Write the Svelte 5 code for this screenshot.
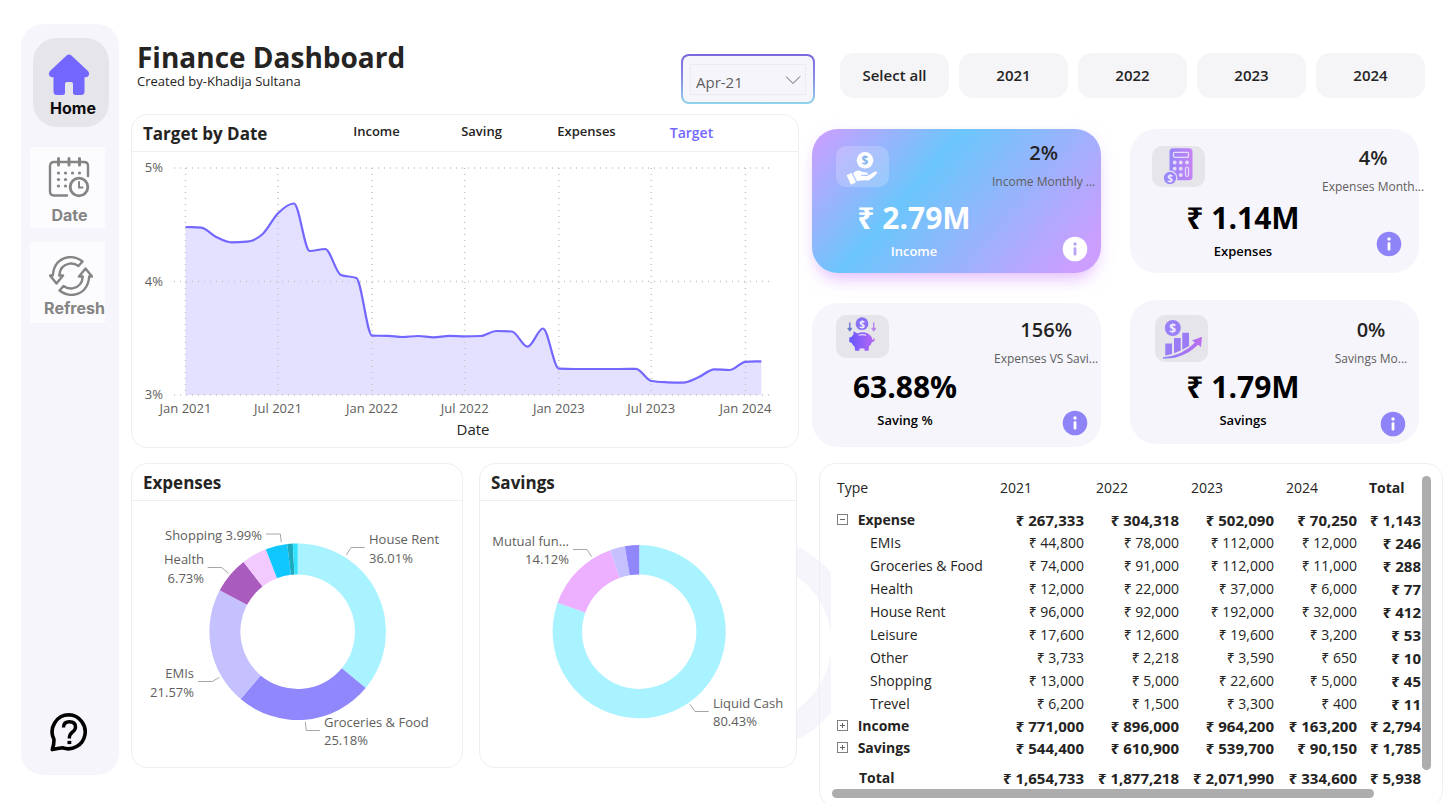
<script>
  const years = ['2021', '2022', '2023', '2024'];
  const tabs = ['Income', 'Saving', 'Expenses', 'Target'];
  let activeTab = $state('Target');
  let month = $state('Apr-21');

  // Monthly target line, Jan 2021 to Feb 2024, as heights on the plot
  const levels = [
    227, 227.7, 236.7, 242.3, 241.7, 234, 213.3, 203.5, 251, 249, 275, 278,
    335.7, 335.8, 337, 336, 337.3, 335.9, 336.3, 336, 331, 331.5, 346.7, 328.5,
    368.6, 369, 369, 369, 369, 368.8, 381, 382.3, 382.7, 377.3, 369.3, 370,
    361.8, 361.3
  ];
  const start = Date.UTC(2021, 0, 1);
  const dayWidth = 0.5114;
  const points = levels.map((y, i) => [
    185.5 + ((Date.UTC(2021, i, 1) - start) / 86400000) * dayWidth,
    y
  ]);

  function monotone(pts) {
    const n = pts.length;
    const slope = [];
    for (let i = 0; i < n - 1; i++) {
      slope.push((pts[i + 1][1] - pts[i][1]) / (pts[i + 1][0] - pts[i][0]));
    }
    const tan = pts.map((_, i) => {
      if (i === 0) return slope[0];
      if (i === n - 1) return slope[n - 2];
      const a = slope[i - 1];
      const b = slope[i];
      if (a * b <= 0) return 0;
      const h0 = pts[i][0] - pts[i - 1][0];
      const h1 = pts[i + 1][0] - pts[i][0];
      const p = (a * h1 + b * h0) / (h0 + h1);
      return Math.sign(a) * 2 * Math.min(Math.abs(a), Math.abs(b), Math.abs(p) / 2);
    });
    let d = `M${pts[0][0]},${pts[0][1]}`;
    for (let i = 0; i < n - 1; i++) {
      const h = (pts[i + 1][0] - pts[i][0]) / 3;
      d += `C${pts[i][0] + h},${pts[i][1] + tan[i] * h} ${pts[i + 1][0] - h},${pts[i + 1][1] - tan[i + 1] * h} ${pts[i + 1][0]},${pts[i + 1][1]}`;
    }
    return d;
  }
  const line = monotone(points);
  const area = `${line}V395H185.5Z`;

  const xTicks = [
    [185.5, 'Jan 2021'], [278, 'Jul 2021'], [372, 'Jan 2022'], [464.7, 'Jul 2022'],
    [558.8, 'Jan 2023'], [651.3, 'Jul 2023'], [745.5, 'Jan 2024']
  ];
  const yTicks = [[168, '5%'], [281.5, '4%'], [395, '3%']];

  function ring(cx, cy, R, r, slices) {
    let a = 0;
    return slices.map(([share, fill]) => {
      const b = a + (share / 100) * Math.PI * 2;
      const big = b - a > Math.PI ? 1 : 0;
      const at = (rad, t) => `${cx + rad * Math.sin(t)},${cy - rad * Math.cos(t)}`;
      const d = `M${at(R, a)}A${R},${R} 0 ${big} 1 ${at(R, b)}L${at(r, b)}A${r},${r} 0 ${big} 0 ${at(r, a)}Z`;
      a = b;
      return { d, fill };
    });
  }

  const expenseRing = ring(297.7, 631.7, 88.3, 57.3, [
    [36.01, '#a8f3ff'], [25.18, '#8f87fb'], [21.57, '#c5c1ff'], [6.73, '#a95cbd'],
    [4.63, '#f2caff'], [3.99, '#10c8ff'], [1, '#1da9c0'], [0.89, '#2fe4ff']
  ]);
  const savingsRing = ring(639.2, 631.7, 86.6, 57.2, [
    [80.43, '#a8f3ff'], [14.12, '#edafff'], [2.8, '#c5c1ff'], [2.65, '#8f87fb']
  ]);

  const donuts = [
    {
      title: 'Expenses',
      box: '132 501 330 266',
      slices: expenseRing,
      leaders: [
        '266,534 280.3,534 281.3,542.3', '207.7,567.5 221.7,567.5 228.3,573.3',
        '346.3,555 351,547.5 364.7,547.5', '198,681.5 212.3,681.5 219.3,677.3',
        '305.3,721.7 306.3,730.5 320,730.5'
      ],
      labels: [
        [262, 540, 'end', 'Shopping 3.99%'],
        [204, 564, 'end', 'Health'], [204, 583, 'end', '6.73%'],
        [369, 544, 'start', 'House Rent'], [369, 563, 'start', '36.01%'],
        [194, 678, 'end', 'EMIs'], [194, 697, 'end', '21.57%'],
        [324, 727, 'start', 'Groceries & Food'], [324, 745, 'start', '25.18%']
      ]
    },
    {
      title: 'Savings',
      box: '480 501 316 266',
      slices: savingsRing,
      leaders: ['573,549.5 587,549.5 591.7,556.7', '690,704.3 695,711.5 708.7,711.5'],
      labels: [
        [569, 546, 'end', 'Mutual fun...'], [569, 564, 'end', '14.12%'],
        [713, 708, 'start', 'Liquid Cash'], [713, 726, 'start', '80.43%']
      ]
    }
  ];

  const kpiColumns = [
    [
      { id: 'income', value: '₹ 2.79M', label: 'Income', rate: '2%', note: 'Income Monthly ...' },
      { id: 'ratio', value: '63.88%', label: 'Saving %', rate: '156%', note: 'Expenses VS Savi...' }
    ],
    [
      { id: 'expenses', value: '₹ 1.14M', label: 'Expenses', rate: '4%', note: 'Expenses Month...' },
      { id: 'savings', value: '₹ 1.79M', label: 'Savings', rate: '0%', note: 'Savings Mo...' }
    ]
  ];

  const rows = [
    { kind: 'group', sign: '−', name: 'Expense', cells: [267333, 304318, 502090, 70250] },
    { kind: 'item', name: 'EMIs', cells: [44800, 78000, 112000, 12000] },
    { kind: 'item', name: 'Groceries & Food', cells: [74000, 91000, 112000, 11000] },
    { kind: 'item', name: 'Health', cells: [12000, 22000, 37000, 6000] },
    { kind: 'item', name: 'House Rent', cells: [96000, 92000, 192000, 32000] },
    { kind: 'item', name: 'Leisure', cells: [17600, 12600, 19600, 3200] },
    { kind: 'item', name: 'Other', cells: [3733, 2218, 3590, 650] },
    { kind: 'item', name: 'Shopping', cells: [13000, 5000, 22600, 5000] },
    { kind: 'item', name: 'Trevel', cells: [6200, 1500, 3300, 400] },
    { kind: 'group', sign: '+', name: 'Income', cells: [771000, 896000, 964200, 163200] },
    { kind: 'group', sign: '+', name: 'Savings', cells: [544400, 610900, 539700, 90150] },
    { kind: 'total', name: 'Total', cells: [1654733, 1877218, 2071990, 334600] }
  ];
  const rupees = (n) => '₹ ' + n.toLocaleString('en-US');
  const sum = (list) => list.reduce((a, b) => a + b, 0);
</script>

<div class="page">
  <nav class="sidebar">
    <button class="nav home">
      <svg width="42" height="42" viewBox="0 0 42 42" aria-hidden="true">
        <path d="M18.6 1.4Q21 -.6 23.4 1.4L40 17Q42 19.500 40.500 21.800Q39.500 23.500 36.500 23.300V37.500Q36.500 41 33 41H27.500Q25 41 25 38.500V30Q25 28 23 28H19Q17 28 17 30V38.500Q17 41 14.500 41H9Q5.500 41 5.500 37.500V23.300Q2.500 23.500 1.500 21.800Q0 19.500 2 17Z" fill="#7367ff" />
      </svg>
      <span>Home</span>
    </button>
    <button class="nav date">
      <svg width="42" height="42" viewBox="0 0 42 42" fill="none" stroke="#848484" stroke-width="2.400" stroke-linecap="round" aria-hidden="true">
        <path d="M19 38.500H6Q2 38.500 2 34.500V9Q2 5 6 5H36Q40 5 40 9V19" />
        <path d="M10.500 1.500V8M21 1.500V8M31.500 1.500V8" stroke-width="3" />
        <circle cx="31" cy="30" r="8.800" stroke-width="2.800" />
        <path d="M31 25V30.500H34.500" stroke-width="2" />
        <g fill="#848484" stroke="none">
          <circle cx="10.500" cy="16" r="1.600" /><circle cx="17.500" cy="16" r="1.600" /><circle cx="24.500" cy="16" r="1.600" /><circle cx="31.500" cy="16" r="1.600" />
          <circle cx="10.500" cy="22.500" r="1.600" /><circle cx="17.500" cy="22.500" r="1.600" />
          <circle cx="10.500" cy="29" r="1.600" /><circle cx="17.500" cy="29" r="1.600" />
        </g>
      </svg>
      <span>Date</span>
    </button>
    <button class="nav refresh">
      <svg width="44" height="40" viewBox="0 0 44 40" fill="none" stroke="#848484" stroke-width="2.400" stroke-linejoin="round" aria-hidden="true">
        <path d="M33.500 5.500Q27 .5 19.500 1.200C10.500 2.200 4.500 9 3.800 19.500H1L7.500 27.500L14 19.500H10.200C10.800 12.500 15 8.500 20.500 7.600Q25.500 7 29.500 10Z" />
        <path d="M10.500 34.500Q17 39.500 24.500 38.800C33.500 37.800 39.500 31 40.200 20.500H43L36.500 12.500L30 20.500H33.800C33.200 27.500 29 31.500 23.500 32.400Q18.500 33 14.500 30Z" />
      </svg>
      <span>Refresh</span>
    </button>
    <button class="help" aria-label="Help">
      <svg width="40" height="40" viewBox="0 0 40 40" fill="none" stroke="#000" aria-hidden="true">
        <path d="M20 2.800A17 17 0 1 1 13.500 35.800Q9 36.500 3.300 37.600Q5 33 5 27.500A17 17 0 0 1 20 2.800Z" stroke-width="3.600" stroke-linejoin="round" />
        <path d="M14.500 15.500Q14.500 9.800 20.500 9.800T26.500 15Q26.500 18 23.500 20T20.300 26.500" stroke-width="3.400" />
        <path d="M18.500 30.500H22.300" stroke-width="3.200" />
      </svg>
    </button>
  </nav>

  <main>
    <header>
      <div class="heading">
        <h1>Finance Dashboard</h1>
        <p>Created by-Khadija Sultana</p>
      </div>
      <div class="month">
        <div class="month-box">
          <select aria-label="Month" bind:value={month}>
            <option>Apr-21</option>
          </select>
          <svg width="16" height="10" viewBox="0 0 16 10" aria-hidden="true"><path d="M1 1.500L8 8.500L15 1.500" fill="none" stroke="#605e5c" /></svg>
        </div>
      </div>
      <div class="slicer">
        <button>Select all</button>
        {#each years as year}
          <button>{year}</button>
        {/each}
      </div>
    </header>

    <div class="overview">
      <section class="panel trend">
        <div class="panel-head">
          <h2>{activeTab} by Date</h2>
          <div class="tabs">
            {#each tabs as tab}
              <button class:active={tab === activeTab} onclick={() => (activeTab = tab)}>{tab}</button>
            {/each}
          </div>
        </div>
        <svg class="chart" viewBox="132 152 666 295" role="img" aria-label="Target by Date">
          <path d={area} fill="#e4e0ff" />
          <g stroke="#c4c4c4" stroke-dasharray="1 5" stroke-width="1.500">
            {#each yTicks as [y]}
              <line x1="174" x2="772" y1={y} y2={y} />
            {/each}
            {#each xTicks as [x]}
              <line x1={x} x2={x} y1="168" y2="395" />
            {/each}
          </g>
          <path d={line} fill="none" stroke="#7367ff" stroke-width="2.200" stroke-linejoin="round" />
          <g class="axis">
            {#each yTicks as [y, text]}
              <text x="163" y={y + 4} text-anchor="end">{text}</text>
            {/each}
            {#each xTicks as [x, text]}
              <text {x} y="413" text-anchor="middle">{text}</text>
            {/each}
          </g>
          <text class="axis-title" x="473" y="435" text-anchor="middle">Date</text>
        </svg>
      </section>

      <div class="kpis">
        {#each kpiColumns as column}
          <div class="kpi-column">
            {#each column as card}
              <article class="kpi {card.id}">
                <div class="main-figure">
                  <div class="tile">
                    {#if card.id === 'income'}
                      <svg width="53" height="41" viewBox="0 0 53 41" aria-hidden="true">
                        <circle cx="29" cy="14.300" r="8.300" fill="#fff" />
                        <text class="coin" x="29" y="18.800" fill="#86b4f0">$</text>
                        <path d="M10.600 29.200L15.600 27L20 36.300L15 38.800Z" fill="#fff" />
                        <path d="M17 27.200Q20 24 24 24.700Q26 26.300 30 26.500Q32.500 27 31.500 29H25.500Q30 30.500 33 29L38.500 25.700Q41 25 41 27Q38 31.500 32.500 34.500Q27 34 21 35.200Z" fill="#fff" />
                        <path d="M25 29.300H31.500" stroke="#9bb5fb" stroke-width=".8" />
                      </svg>
                    {:else if card.id === 'ratio'}
                      <svg width="53" height="43" viewBox="0 0 53 43" aria-hidden="true">
                        <defs><linearGradient id="pig"><stop offset="0" stop-color="#6657ff" /><stop offset="1" stop-color="#b968f4" /></linearGradient></defs>
                        <circle cx="26" cy="8.700" r="6.400" fill="#8a72f5" />
                        <text class="coin small" x="26" y="12.500" fill="#f0eaff">$</text>
                        <path d="M13.800 7.500V15M11.800 12.800L13.800 15.500L15.800 12.800" fill="none" stroke="#6674ce" stroke-width="1.400" />
                        <path d="M37.700 7.500V15M35.700 12.800L37.700 15.500L39.700 12.800" fill="none" stroke="#b583ee" stroke-width="1.400" />
                        <path d="M17.500 16.200L21.500 18.500Q26 16.500 31 18Q36 20.500 36.500 25Q38 25.500 37.300 23.500L38.500 23.300Q39.500 27 36 27Q35 30 33 31.200L32.600 35.800H28.500V33.500H23.500V35.800H19.300L18.500 31.500Q16.500 30 15.800 28L13.300 27V22.500L15.500 22Q16 20.500 17.500 19.500Z" fill="url(#pig)" />
                        <path d="M22.500 20.300Q26.500 18.800 30 20.400" fill="none" stroke="#ded7ff" stroke-width="1.200" />
                      </svg>
                    {:else if card.id === 'expenses'}
                      <svg width="53" height="41" viewBox="0 0 53 41" aria-hidden="true">
                        <defs><linearGradient id="calc"><stop offset="0" stop-color="#9686fb" /><stop offset="1" stop-color="#c583f4" /></linearGradient></defs>
                        <rect x="17.500" y="2.300" width="23" height="32" rx="3.500" fill="url(#calc)" />
                        <rect x="21.500" y="6.300" width="15" height="5" rx="1" fill="none" stroke="#e6dcf8" stroke-width="1.300" />
                        <g fill="#e6dcf8">
                          <circle cx="22.700" cy="16.500" r="1.900" /><circle cx="28.800" cy="16.500" r="1.900" /><circle cx="35" cy="16.500" r="1.900" />
                          <circle cx="22.700" cy="22.700" r="1.900" /><circle cx="28.800" cy="22.700" r="1.900" /><circle cx="28.800" cy="29" r="1.900" />
                        </g>
                        <rect x="33.500" y="21" width="3" height="9.500" rx="1.500" fill="none" stroke="#e6dcf8" stroke-width="1.200" />
                        <circle cx="18" cy="32" r="6.800" fill="#9a88fb" stroke="#e8e7ee" stroke-width="1.200" />
                        <text class="coin small" x="18" y="35.800" fill="#f0eaff">$</text>
                      </svg>
                    {:else}
                      <svg width="53" height="47" viewBox="0 0 53 47" aria-hidden="true">
                        <defs><linearGradient id="rise"><stop offset="0" stop-color="#8580f8" /><stop offset="1" stop-color="#bd6df0" /></linearGradient></defs>
                        <circle cx="17.800" cy="13" r="8" fill="#9a80f8" />
                        <text class="coin" x="17.800" y="17.500" fill="#f0eaff">$</text>
                        <path d="M10.300 28.500H17V39L10.300 40.500ZM19 23H25.700V35.500L19 38.300ZM27.300 17.700H34V31L27.300 34.800Z" fill="#9a7df6" />
                        <path d="M8 42.300Q27 41 40 27.500L37 25.500L47 21.800L46 32L43 29.800Q28 44.500 8 43.500Z" fill="url(#rise)" />
                      </svg>
                    {/if}
                  </div>
                  <strong>{card.value}</strong>
                  <span>{card.label}</span>
                </div>
                <div class="rate">
                  <b>{card.rate}</b>
                  <small>{card.note}</small>
                </div>
                <button class="info" aria-label="About {card.label}">
                  <svg width="26" height="26" viewBox="0 0 26 26" aria-hidden="true">
                    <circle class="disc" cx="13" cy="13" r="12.300" />
                    <circle class="mark" cx="13" cy="8" r="1.700" />
                    <rect class="mark" x="11.600" y="11.200" width="2.800" height="8.300" rx="1" />
                  </svg>
                </button>
              </article>
            {/each}
          </div>
        {/each}
      </div>
    </div>

    <div class="details">
      {#each donuts as donut}
        <section class="panel donut">
          <div class="panel-head"><h2>{donut.title}</h2></div>
          <svg class="chart" viewBox={donut.box} role="img" aria-label={donut.title}>
            {#each donut.slices as slice}
              <path d={slice.d} fill={slice.fill} />
            {/each}
            {#each donut.leaders as leader}
              <polyline points={leader} fill="none" stroke="#a6a6a6" />
            {/each}
            {#each donut.labels as [x, y, anchor, text]}
              <text {x} {y} text-anchor={anchor}>{text}</text>
            {/each}
          </svg>
        </section>
      {/each}

      <section class="panel matrix">
        <svg class="halo" width="34" height="220" viewBox="797 534 34 220" aria-hidden="true">
          <circle cx="750.500" cy="643" r="94" fill="none" stroke="#f6f5fc" stroke-width="26" />
        </svg>
        <div class="viewport">
          <table>
            <colgroup><col class="c-type" /><col class="c-first" /><col class="c-year" /><col class="c-year" /><col class="c-last" /><col class="c-total" /></colgroup>
            <thead>
              <tr>
                <th>Type</th>
                {#each years as year}<th>{year}</th>{/each}
                <th class="sum">Total</th>
              </tr>
            </thead>
            <tbody>
              {#each rows as row}
                <tr class={row.kind}>
                  <th scope="row">
                    {#if row.sign}
                      <button class="toggle" aria-label="Toggle {row.name}">
                        <svg width="11" height="11" viewBox="0 0 11 11" aria-hidden="true">
                          <rect x=".5" y=".5" width="10" height="10" fill="none" stroke="#808080" />
                          <path d={row.sign === '+' ? 'M3 5.500H8M5.500 3V8' : 'M3 5.500H8'} stroke="#666" />
                        </svg>
                      </button>
                    {/if}
                    {row.name}
                  </th>
                  {#each row.cells as cell}<td>{rupees(cell)}</td>{/each}
                  <td class="sum">{rupees(sum(row.cells))}</td>
                </tr>
              {/each}
            </tbody>
          </table>
        </div>
        <div class="bar vertical"></div>
        <div class="bar horizontal"></div>
      </section>
    </div>
  </main>
</div>

<style>
  :global(body) {
    margin: 0;
    background: #fff;
  }
  .page {
    display: flex;
    gap: 12px;
    min-height: 100vh;
    padding: 24px 3px 0 21px;
    box-sizing: border-box;
    overflow: hidden;
    font-family: 'Open Sans', 'Noto Sans', sans-serif;
    color: #252423;
  }
  button {
    font: inherit;
    color: inherit;
    border: 0;
    padding: 0;
    background: none;
    cursor: pointer;
  }
  svg {
    display: block;
  }

  .sidebar {
    flex: 0 0 98px;
    box-sizing: border-box;
    display: flex;
    flex-direction: column;
    align-items: flex-start;
    align-self: flex-start;
    min-height: 751px;
    padding: 14px 0 23px 9px;
    border-radius: 22px;
    background: #f6f5fc;
  }
  .nav {
    display: flex;
    flex-direction: column;
    align-items: center;
    width: 75px;
    height: 81px;
    box-sizing: border-box;
    padding-top: 10px;
    background: #fcfcfe;
    color: #848484;
    font: 700 16px/20px Inter, 'Liberation Sans', sans-serif;
  }
  .nav span {
    white-space: nowrap;
  }
  .home {
    width: 76px;
    height: 89px;
    margin: 0 0 20px 3px;
    padding-top: 16px;
    border-radius: 24px;
    background: #e6e5ea;
    color: #0b0b0b;
  }
  .home svg {
    margin-right: 4px;
  }
  .home span {
    margin-left: 4px;
    margin-top: 2px;
  }
  .date {
    margin-bottom: 14px;
  }
  .date svg {
    margin-left: 2px;
  }
  .date span {
    margin: 6px 0 0 4px;
  }
  .refresh {
    padding-top: 14px;
  }
  .refresh svg {
    margin-left: 6px;
  }
  .refresh span {
    margin: 2px 0 0 14px;
  }
  .help {
    margin: auto 0 0 19px;
  }

  main {
    flex: 1;
    min-width: 0;
  }
  header {
    display: flex;
    align-items: flex-start;
    height: 90px;
    box-sizing: border-box;
  }
  .heading {
    flex: 1;
    padding: 17px 0 0 6px;
  }
  h1 {
    margin: 0;
    font-size: 28px;
    line-height: 32px;
    font-weight: 700;
  }
  p {
    margin: 0;
    font-size: 13px;
    line-height: 16px;
  }
  .month {
    width: 134px;
    box-sizing: border-box;
    margin-top: 30px;
    padding: 8px 7px 7px;
    border: 2px solid transparent;
    border-radius: 8px;
    background: linear-gradient(#f6f5fc, #f6f5fc) padding-box, linear-gradient(#7868dc, #8a8ee4 50%, #8fd4e8) border-box;
  }
  .month-box {
    display: flex;
    align-items: center;
    padding-right: 4px;
    border: 1px solid #ececf0;
  }
  select {
    flex: 1;
    min-width: 0;
    height: 29px;
    appearance: none;
    padding: 4px 0 0 5px;
    border: 0;
    background: none;
    color: #605e5c;
    font: 15px 'Open Sans', 'Noto Sans', sans-serif;
  }
  .slicer {
    display: grid;
    grid-template-columns: repeat(5, 1fr);
    gap: 10px;
    width: 585px;
    margin: 29px 18px 0 25px;
  }
  .slicer button {
    height: 45px;
    padding-bottom: 2px;
    border-radius: 14px;
    background: #f5f5f8;
    font-size: 15px;
    font-weight: 600;
  }

  .overview {
    display: grid;
    grid-template-columns: minmax(0, 668fr) minmax(0, 607fr);
    gap: 13px;
    padding-right: 24px;
  }
  .panel {
    position: relative;
    box-sizing: border-box;
    border: 1px solid #efeff1;
    border-radius: 16px;
    background: #fff;
  }
  .panel-head {
    display: flex;
    align-items: center;
    height: 34px;
    padding: 2px 0 0 11px;
    border-bottom: 1px solid #efeff1;
  }
  h2 {
    margin: 0;
    font-size: 17px;
    line-height: 24px;
    font-weight: 700;
  }
  .trend h2 {
    width: 181px;
  }
  .tabs {
    display: grid;
    grid-template-columns: repeat(4, 105px);
    margin-bottom: 6px;
    font-size: 13px;
    font-weight: 600;
  }
  .tabs button {
    height: 20px;
    line-height: 20px;
    overflow: hidden;
  }
  .tabs .active {
    height: 17px;
    margin-top: 3px;
    font-size: 14px;
    line-height: 18px;
    color: #7367ff;
  }
  .chart {
    width: 100%;
    height: auto;
    font-size: 13px;
    fill: #605e5c;
  }
  .axis {
    font-size: 13px;
  }
  .axis-title {
    font-size: 15px;
    font-weight: 500;
    fill: #252423;
  }

  .kpis {
    display: grid;
    grid-template-columns: repeat(2, minmax(0, 1fr));
    gap: 29px;
    padding-top: 15px;
  }
  .kpi-column {
    display: flex;
    flex-direction: column;
    gap: 30px;
  }
  .kpi-column:nth-child(2) {
    gap: 27px;
  }
  .kpi {
    position: relative;
    display: flex;
    height: 144px;
    box-sizing: border-box;
    border-radius: 26px;
    background: #f6f5fc;
  }
  .main-figure {
    flex: none;
    display: flex;
    flex-direction: column;
    align-items: center;
    width: 192px;
    box-sizing: border-box;
    padding: 17px 0 13px 34px;
    color: #000;
    white-space: nowrap;
  }
  .main-figure strong {
    font-size: 30px;
    line-height: 40px;
    font-weight: 700;
  }
  .main-figure span {
    margin-top: 4px;
    font-size: 13px;
    line-height: 18px;
    font-weight: 600;
  }
  .tile {
    align-self: flex-start;
    margin: 0 0 auto -12px;
    border-radius: 10px;
    background: #e6e5ea;
  }
  .coin {
    font: 700 12px 'Open Sans', sans-serif;
    text-anchor: middle;
  }
  .coin.small {
    font-size: 10px;
  }
  .rate {
    flex: 0 0 98px;
    padding-top: 17px;
    text-align: center;
    white-space: nowrap;
  }
  .rate b,
  .rate small {
    display: block;
  }
  .rate b {
    font-size: 20px;
    line-height: 24px;
    font-weight: 600;
  }
  .rate small {
    display: flex;
    justify-content: center;
    margin-top: 9px;
    font-size: 12px;
    line-height: 16px;
    color: #605e5c;
  }
  .info {
    position: absolute;
    right: 13px;
    bottom: 11px;
  }
  .disc {
    fill: #8f83f8;
  }
  .mark {
    fill: #fff;
  }
  .expenses .info {
    right: 17px;
    bottom: 16px;
  }
  .savings .info {
    bottom: 7px;
  }
  .income {
    background: linear-gradient(131deg, #cf9dff 0%, #6bc6fb 37%, #cb9eff 92%);
    box-shadow: 0 12px 18px -8px rgba(205, 130, 255, 0.55), 0 2px 14px rgba(225, 200, 255, 0.25);
  }
  .income .main-figure {
    width: 180px;
    padding-left: 24px;
    color: #fff;
  }
  .income .tile {
    margin-left: 0;
    background: rgba(255, 255, 255, 0.2);
  }
  .income .rate {
    padding-top: 12px;
  }
  .income .disc {
    fill: #fff;
  }
  .income .mark {
    fill: #b9a4f8;
  }
  .ratio .main-figure {
    width: 182px;
    padding: 12px 0 18px 4px;
  }
  .ratio .tile {
    margin-left: 20px;
  }
  .ratio .rate {
    padding-top: 15px;
  }
  .savings .main-figure {
    padding-top: 15px;
    padding-bottom: 15px;
  }
  .savings .tile {
    margin-left: -9px;
  }
  .savings .rate {
    padding-top: 18px;
  }

  .details {
    display: grid;
    grid-template-columns: minmax(0, 332fr) minmax(0, 318fr) minmax(0, 630fr);
    column-gap: 16px;
    align-items: start;
    padding-top: 15px;
  }
  .matrix {
    display: grid;
    grid-template-columns: 1fr 9px;
    grid-template-rows: 313px 9px;
    column-gap: 1px;
    height: 344px;
    margin: 0 0 -4px 6px;
    padding: 12px 11px 0 12px;
    background: none;
  }
  .halo {
    position: absolute;
    z-index: -1;
    left: -23px;
    top: 70px;
  }
  .viewport {
    position: relative;
    overflow: hidden;
    min-width: 0;
  }
  .bar {
    border-radius: 5px;
    background: #adadad;
  }
  .vertical {
    height: 294px;
  }
  .horizontal {
    width: 92%;
    height: 9px;
  }
  table {
    width: 626px;
    table-layout: fixed;
    border-collapse: collapse;
    font-size: 14px;
    line-height: 20px;
    white-space: nowrap;
  }
  .c-type {
    width: 163px;
  }
  .c-first {
    width: 96px;
  }
  .c-year {
    width: 95px;
  }
  .c-last {
    width: 83px;
  }
  .c-total {
    width: 94px;
  }
  th,
  td {
    height: 23px;
    box-sizing: border-box;
    padding: 0 7px 0 5px;
    font-weight: 400;
    text-align: left;
  }
  thead th {
    height: 33px;
    padding-bottom: 9px;
  }
  td {
    padding-left: 0;
    text-align: right;
  }
  .item th {
    padding-left: 38px;
  }
  .group th,
  .group td,
  .total th,
  .total td,
  tbody .sum {
    font-size: 15px;
    font-weight: 700;
  }
  thead .sum {
    font-weight: 700;
  }
  .group th,
  .total th {
    font-size: 14px;
  }
  .group th,
  .group td {
    height: 22px;
  }
  .total th {
    padding-left: 27px;
  }
  .total th,
  .total td {
    height: 38px;
  }
  .toggle {
    margin-right: 6px;
  }
</style>
